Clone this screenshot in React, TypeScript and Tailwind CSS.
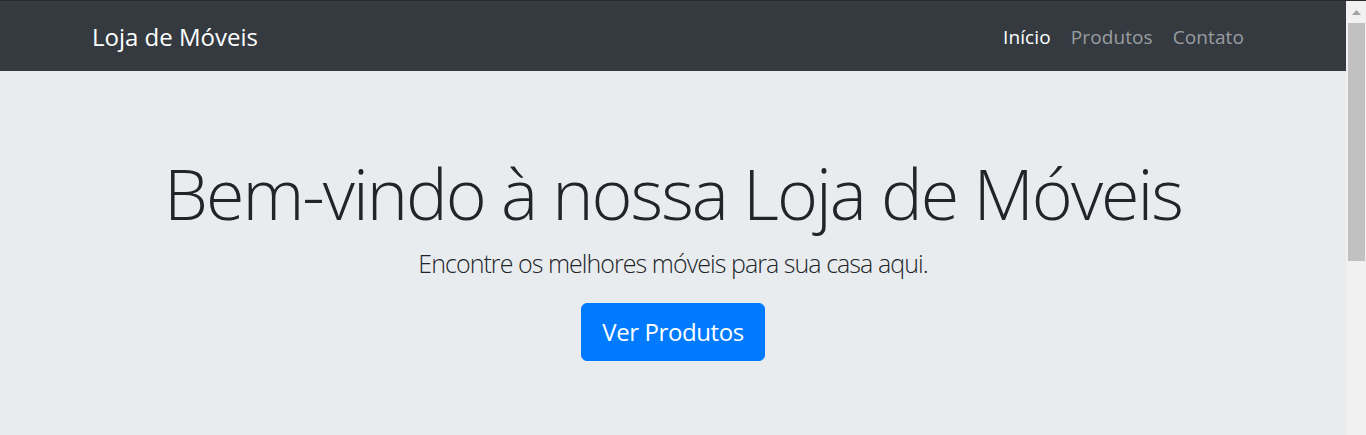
import { FC } from "react";

const links = [
  { label: "Início", active: true },
  { label: "Produtos", active: false },
  { label: "Contato", active: false },
];

// barra de rolagem falsa, como no print
const Scrollbar: FC = () => (
  <div className="w-[20px] shrink-0 bg-[#f1f1f1] flex flex-col items-end">
    <div className="h-[22px] w-[17px] flex items-center justify-center mr-[1px]">
      <svg width="9" height="5" viewBox="0 0 9 5">
        <polygon points="4.5,0 9,5 0,5" fill="#a3a3a3" />
      </svg>
    </div>
    <div className="h-[238px] w-[17px] mr-[1px] bg-[#c1c1c1]" />
  </div>
);

const App: FC = () => {
  return (
    <div
      className="h-[435px] w-[1366px] overflow-hidden flex flex-col bg-[#e9ecef]"
      style={{ fontFamily: '"Open Sans", "Noto Sans", sans-serif' }}
    >
      <div className="h-px bg-[#2b2b2b] shrink-0" />
      <div className="flex flex-1 min-h-0">
        <div className="flex-1 flex flex-col">
          {/* navbar */}
          <nav className="bg-[#343a40] h-[70px] shrink-0">
            <div className="w-[1200px] mx-auto px-[19px] h-full flex items-center justify-between">
              <span className="text-white text-[24px] leading-[1.5] pt-[2px]">
                Loja de Móveis
              </span>
              <ul className="flex pt-[2px]">
                {links.map((l) => (
                  <li key={l.label}>
                    <span
                      className={`block px-[10px] text-[19px] leading-[1.5] tracking-[0.1px] ${
                        l.active ? "text-white" : "text-[#9a9da0]"
                      }`}
                    >
                      {l.label}
                    </span>
                  </li>
                ))}
              </ul>
            </div>
          </nav>

          {/* jumbotron */}
          <section className="flex-1 pt-[80px] text-center text-[#212529]">
            <div className="w-[1200px] mx-auto px-[19px]">
              <h1 className="text-[70px] font-light leading-[1.2] mb-[10px] tracking-[-2px]">
                Bem-vindo à nossa Loja de Móveis
              </h1>
              <p className="text-[25px] font-light leading-[1.5] mb-[20px] tracking-[-0.95px]">
                Encontre os melhores móveis para sua casa aqui.
              </p>
              <button className="bg-[#007bff] border border-[#007bff] text-white text-[24px] leading-[1.5] px-[20px] py-[10px] rounded-[6px] tracking-[-0.4px]">
                Ver Produtos
              </button>
            </div>
          </section>
        </div>
        <Scrollbar />
      </div>
    </div>
  );
};

export default App;
